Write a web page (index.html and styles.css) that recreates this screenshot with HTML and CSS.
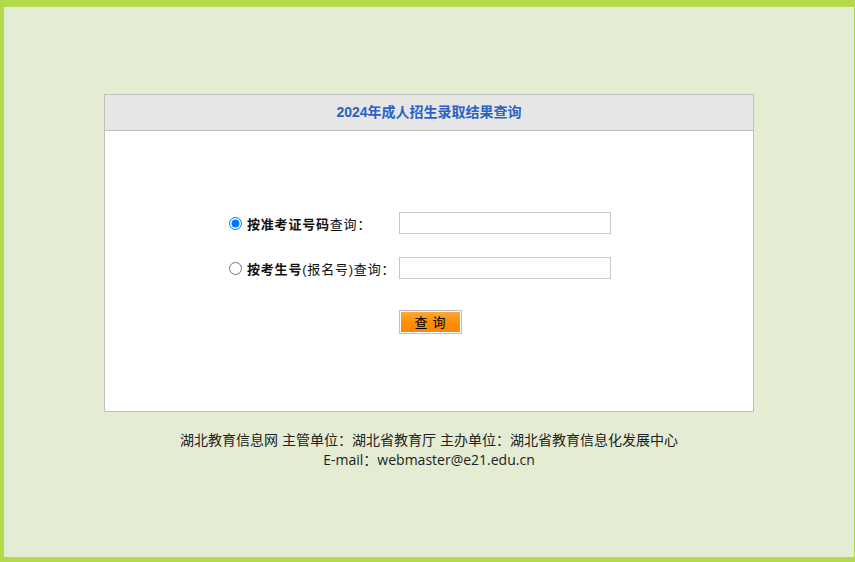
FILE: index.html
```html
<!DOCTYPE html>
<html lang="zh-CN">
<head>
<meta charset="utf-8">
<title>2024年成人招生录取结果查询</title>
<link rel="stylesheet" href="styles.css">
</head>
<body>
<div class="panel">
  <div class="panel-head">2024年成人招生录取结果查询</div>
  <div class="panel-body">
    <form class="query-form">
      <div class="row">
        <label class="label"><input type="radio" name="t" class="radio" checked><b>按准考证号码</b>查询：</label>
        <input type="text" class="field">
      </div>
      <div class="row">
        <label class="label"><input type="radio" name="t" class="radio"><b>按考生号</b>(报名号)查询：</label>
        <input type="text" class="field">
      </div>
      <div class="row btn-row">
        <button type="button" class="btn">查 询</button>
      </div>
    </form>
  </div>
</div>
<div class="footer">
  <div>湖北教育信息网 主管单位：湖北省教育厅 主办单位：湖北省教育信息化发展中心</div>
  <div class="mail">E-mail：webmaster@e21.edu.cn</div>
</div>
</body>
</html>
```
FILE: styles.css
```css
html, body { margin: 0; padding: 0; }
body {
  box-sizing: border-box;
  height: 562px;
  border-style: solid;
  border-color: #b3da4c;
  border-width: 7px 1px 5px 4px;
  background: #e4ecd3;
  font-family: "Liberation Sans", "Noto Sans CJK SC", sans-serif;
  color: #222;
  overflow: hidden;
}
.panel {
  box-sizing: border-box;
  width: 650px;
  margin: 87px auto 0;
  border: 1px solid #c0c0c0;
  background: #fff;
}
.panel-head {
  height: 35px;
  line-height: 35px;
  background: #e6e6e6;
  border-bottom: 1px solid #c0c0c0;
  text-align: center;
  font-size: 14px;
  font-weight: bold;
  color: #2b62c3;
}
.panel-body {
  height: 280px;
  box-sizing: border-box;
  padding: 81px 0 0 124px;
}
.query-form { display: flex; flex-direction: column; gap: 23px; }
.row { display: flex; align-items: center; height: 22px; }
.label {
  width: 170px;
  display: flex;
  align-items: center;
  font-size: 13px;
  letter-spacing: 0.8px;
  color: #111;
  white-space: nowrap;
}
.label b { font-weight: bold; }
.radio { margin: 0 5px 0 0; width: 13px; height: 13px; }
.field {
  box-sizing: border-box;
  width: 212px;
  height: 22px;
  margin: 0;
  border: 1px solid #c8c8c8;
  padding: 0 3px;
}
.btn-row { padding-left: 170px; margin-top: 7px; height: 25px; }
.btn {
  box-sizing: border-box;
  width: 63px;
  height: 24px;
  margin: 0;
  border: 1px solid #c0c0c0;
  padding: 1px;
  background: linear-gradient(#ffa73a, #ff8c00 55%, #ff8800) content-box, #fff;
  font-family: "Noto Sans CJK SC", sans-serif;
  font-size: 13px;
  letter-spacing: 1px;
  color: #000;
  line-height: 18px;
  cursor: pointer;
}
.footer {
  margin-top: 18px;
  text-align: center;
  font-size: 14px;
  line-height: 20px;
  color: #222;
}
.mail { font-family: "Open Sans", "Noto Sans CJK SC", sans-serif; }
```
